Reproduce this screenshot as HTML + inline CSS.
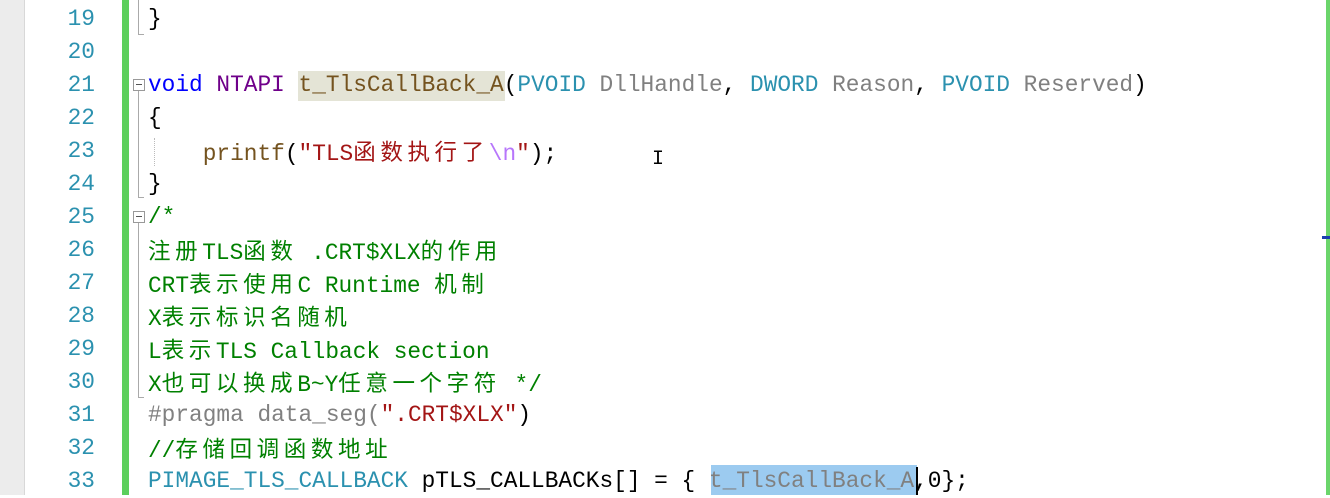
<!DOCTYPE html>
<html><head><meta charset="utf-8"><style>
body{margin:0;width:1330px;height:495px;overflow:hidden;background:#fff;position:relative;font-family:"Liberation Mono","Noto Sans CJK SC",monospace;font-size:22.8px}
.gut{position:absolute;left:0;top:0;width:24px;height:495px;background:#ececec;border-right:1px solid #d8d8d8}
.green{position:absolute;left:122px;top:0;width:7px;height:495px;background:#5ccf5c}
.rg{position:absolute;left:1326px;top:0;width:4px;height:495px;background:#6bd56b}
.ln{position:absolute;left:30px;width:65px;text-align:right;color:#2b91af;line-height:33px;height:33px}
.c{position:absolute;left:148px;line-height:33px;height:33px;white-space:pre;color:#000}
.z{font-family:"Noto Sans CJK SC",sans-serif;letter-spacing:4.6px;font-size:22.5px}
.k{color:#0000ff}.m{color:#6f008a}.p{color:#808080}.t{color:#2b91af}.f{color:#74531f}.s{color:#a31515}.e{color:#b776fb}.g{color:#008000}
.box{position:absolute;left:133px;width:10px;height:10px;border:1px solid #999;background:#fff;font-size:10px;line-height:10px}
.box:after{content:"";position:absolute;left:2px;top:4px;width:6px;height:1px;background:#555}
.vl{position:absolute;left:138px;width:1px;background:#aaa}
.hl{position:absolute;height:1px;background:#aaa;left:138px;width:6px}
</style></head><body>
<div class="gut"></div><div class="green"></div><div class="rg"></div>
<div style="position:absolute;left:1322px;top:236px;width:8px;height:3px;background:#1b3fb0"></div>
<div class="ln" style="top:3px">19</div><div class="ln" style="top:36px">20</div><div class="ln" style="top:69px">21</div><div class="ln" style="top:102px">22</div><div class="ln" style="top:135px">23</div><div class="ln" style="top:168px">24</div><div class="ln" style="top:201px">25</div><div class="ln" style="top:234px">26</div><div class="ln" style="top:267px">27</div><div class="ln" style="top:300px">28</div><div class="ln" style="top:333px">29</div><div class="ln" style="top:366px">30</div><div class="ln" style="top:399px">31</div><div class="ln" style="top:432px">32</div><div class="ln" style="top:465px">33</div>
<div class="vl" style="top:0;height:34px"></div><div class="hl" style="top:34px"></div>
<div class="box" style="top:79px"></div><div class="vl" style="top:91px;height:106px"></div><div class="hl" style="top:197px"></div>
<div class="box" style="top:211px"></div><div class="vl" style="top:223px;height:174px"></div><div class="hl" style="top:397px"></div>
<div style="position:absolute;left:154px;top:138px;width:1px;height:28px;border-left:1px dotted #bbb"></div>
<div style="position:absolute;left:298px;top:71px;width:207px;height:30px;background:#e4e4d6"></div>
<div style="position:absolute;left:711px;top:465px;width:206px;height:30px;background:#9ccbf0"></div>
<div style="position:absolute;left:916px;top:467px;width:2px;height:28px;background:#000"></div>
<div class="c" style="top:3px">}</div>
<div class="c" style="top:69px"><span class="k">void</span> <span class="m">NTAPI</span> <span class="f">t_TlsCallBack_A</span>(<span class="t">PVOID</span> <span class="p">DllHandle</span>, <span class="t">DWORD</span> <span class="p">Reason</span>, <span class="t">PVOID</span> <span class="p">Reserved</span>)</div>
<div class="c" style="top:102px">{</div>
<div class="c" style="top:135px">    <span class="f">printf</span>(<span class="s">"TLS<span class="z">函数执行了</span></span><span class="e">\n</span><span class="s">"</span>);</div>
<div class="c" style="top:168px">}</div>
<div class="c g" style="top:201px">/*</div>
<div class="c g" style="top:234px"><span class="z">注册</span>TLS<span class="z">函数</span> .CRT$XLX<span class="z">的作用</span></div>
<div class="c g" style="top:267px">CRT<span class="z">表示使用</span>C Runtime <span class="z">机制</span></div>
<div class="c g" style="top:300px">X<span class="z">表示标识名随机</span></div>
<div class="c g" style="top:333px">L<span class="z">表示</span>TLS Callback section</div>
<div class="c g" style="top:366px">X<span class="z">也可以换成</span>B~Y<span class="z">任意一个字符</span> */</div>
<div class="c" style="top:399px"><span class="p">#pragma data_seg(</span><span class="s">".CRT$XLX"</span>)</div>
<div class="c g" style="top:432px">//<span class="z">存储回调函数地址</span></div>
<div class="c" style="top:465px"><span class="t">PIMAGE_TLS_CALLBACK</span> pTLS_CALLBACKs[] = { <span class="p">t_TlsCallBack_A</span>,0};</div>
<div style="position:absolute;left:652px;top:150px;font-size:20px;line-height:20px">I</div>
</body></html>
